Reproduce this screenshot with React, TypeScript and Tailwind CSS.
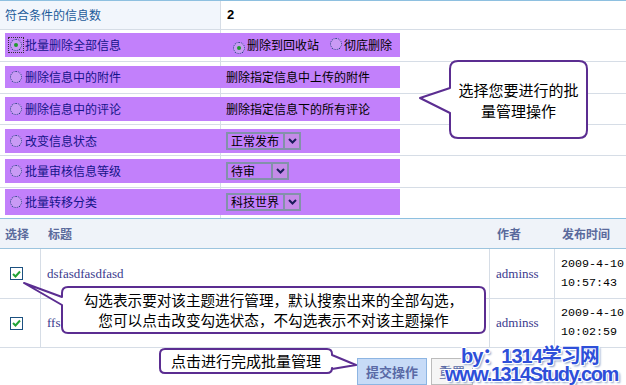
import React from "react";

const cjk = "font-['Noto_Sans_CJK_SC','Noto_Sans',sans-serif]";

function Radio({ checked = false, focus = false }: { checked?: boolean; focus?: boolean }) {
  return (
    <span className={`inline-flex items-center justify-center w-[14px] h-[14px] ${focus ? "outline-1 outline-dotted outline-[#333]" : ""}`}>
      <span className="w-[12px] h-[12px] rounded-full border border-dotted border-[#1d3f7a] flex items-center justify-center bg-[#c99af5]">
        {checked && <span className="w-[4px] h-[4px] rounded-full bg-[#1f9a2e]" />}
      </span>
    </span>
  );
}

function Select({ label, width }: { label: string; width: number }) {
  return (
    <div
      className="h-[18px] border-2 border-[#8391aa] flex items-stretch text-black text-[12px]"
      style={{ width }}
    >
      <span className="flex-1 pl-[3px] leading-[14px]">{label}</span>
      <span className="w-[16px] bg-[#c58be8] border-l-2 border-[#8391aa] flex items-center justify-center">
        <svg width="9" height="6" viewBox="0 0 9 6">
          <path d="M1 1 L4.5 4.5 L8 1" stroke="#1a1a5a" strokeWidth="2" fill="none" />
        </svg>
      </span>
    </div>
  );
}

function Check() {
  return (
    <span className="w-[13px] h-[13px] border border-[#1c5180] bg-white flex items-center justify-center">
      <svg width="9" height="8" viewBox="0 0 9 8">
        <path d="M1 4 L3.5 6.5 L8 1.5" stroke="#21a336" strokeWidth="2" fill="none" />
      </svg>
    </span>
  );
}

const rows = [
  { h: 32, top: 3, bh: 24, label: "批量删除全部信息", checked: true, focus: true, right: "radios" },
  { h: 32, top: 4, bh: 22, label: "删除信息中的附件", right: "删除指定信息中上传的附件" },
  { h: 31, top: 3, bh: 24, label: "删除信息中的评论", right: "删除指定信息下的所有评论" },
  { h: 31, top: 4, bh: 24, label: "改变信息状态", sel: "正常发布", sw: 75 },
  { h: 32, top: 3, bh: 24, label: "批量审核信息等级", sel: "待审", sw: 63 },
  { h: 31, top: 1, bh: 26, label: "批量转移分类", sel: "科技世界", sw: 75 },
];

const posts = [
  { title: "dsfasdfasdfasd", author: "adminss", d: "2009-4-10", t: "10:57:43", h: 50 },
  { title: "ffs", author: "adminss", d: "2009-4-10", t: "10:02:59", h: 49 },
];

export default function App() {
  return (
    <div className={`relative w-[626px] h-[385px] overflow-hidden bg-white text-[12px] ${cjk}`}>
      {/* top form */}
      <div className="border-t border-[#8ec0e0]">
        <div className="flex h-[29px] border-b border-[#d6dde6]">
          <div className="w-[221px] bg-[#f2f6fc] border-r border-[#d6dde6] pl-[5px] flex items-center text-[#1d5b9a]">
            符合条件的信息数
          </div>
          <div className="pl-[6px] flex items-center font-bold text-[13px] font-['Liberation_Sans',sans-serif]">2</div>
        </div>
        {rows.map((r, i) => (
          <div
            key={i}
            className={`bg-[linear-gradient(to_right,transparent_220px,#d6dde6_220px,#d6dde6_221px,transparent_221px)] pl-[5px] ${
              i === rows.length - 1 ? "border-b border-[#8ec0e0]" : "border-b border-[#d6dde6]"
            }`}
            style={{ height: r.h, paddingTop: r.top }}
          >
            <div className="w-[395px] bg-[#c280fb] flex items-center" style={{ height: r.bh }}>
              <div className="w-[216px] flex items-center gap-[2px] pl-[4px] text-[#14148a]">
                <Radio checked={r.checked} focus={r.focus} />
                <span>{r.label}</span>
              </div>
              <div className="flex-1 flex items-center pl-[5px] text-black">
                {r.right === "radios" ? (
                  <div className="flex items-center">
                    <span className="ml-[6px]"><Radio checked /></span>
                    <span className="ml-[1px]">删除到回收站</span>
                    <span className="ml-[10px]"><Radio /></span>
                    <span className="ml-[1px]">彻底删除</span>
                  </div>
                ) : r.sel ? (
                  <Select label={r.sel} width={r.sw!} />
                ) : (
                  <span>{r.right}</span>
                )}
              </div>
            </div>
          </div>
        ))}
      </div>

      {/* list header */}
      <div className="flex h-[30px] bg-[#eff3f9] border-b border-[#9cc4de] items-center font-bold text-[#5a6a9c]">
        <div className="w-[41px] pl-[5px]">选择</div>
        <div className="w-[449px] pl-[7px]">标题</div>
        <div className="w-[65px] pl-[7px]">作者</div>
        <div className="pl-[7px]">发布时间</div>
      </div>
      {posts.map((p, i) => (
        <div key={i} className="flex border-b border-[#d6dde6]" style={{ height: p.h }}>
          <div className="w-[41px] border-r border-[#d6dde6] flex items-center pl-[10px]">
            <Check />
          </div>
          <div className="w-[449px] border-r border-[#d6dde6] flex items-center pl-[6px] text-[13px] text-[#3a3a8e] font-['Liberation_Serif',serif]">
            {p.title}
          </div>
          <div className="w-[65px] border-r border-[#d6dde6] flex items-center pl-[6px] text-[13px] text-[#3a3a8e] font-['Liberation_Serif',serif]">
            {p.author}
          </div>
          <div className="flex flex-col justify-center pl-[6px] text-[11.7px] leading-[19px] text-black font-['Liberation_Mono',monospace]">
            <span>{p.d}</span>
            <span>{p.t}</span>
          </div>
        </div>
      ))}

      {/* buttons */}
      <div className="flex gap-[4px] pl-[357px] pt-[10px]">
        <button className="h-[27px] w-[70px] border border-[#8db5e2] bg-[#c7dbf7] text-[13px] font-bold text-[#5a6aa6]">
          提交操作
        </button>
        <button className="h-[27px] w-[42px] border border-[#bcbcbc] bg-[#f5f5f5] text-[13px] text-[#5a6aa6]">
          重置
        </button>
      </div>

      {/* callouts */}
      <svg className="absolute inset-0 pointer-events-none" width="626" height="385">
        <g fill="white" stroke="#5b2d91" strokeWidth="2" strokeLinejoin="round">
          <path d="M458,61 H579 Q587,61 587,69 V130 Q587,138 579,138 H458 Q450,138 450,130 V113 L420,98 L450,88 V69 Q450,61 458,61 Z" />
          <path d="M68,287 H479 Q485,287 485,293 V327 Q485,333 479,333 H68 Q62,333 62,327 V305 L24,283 L62,297 V293 Q62,287 68,287 Z" />
          <path d="M165,349 H327 Q332,349 332,354 V355 L356,365 L332,369 V368 Q332,373 327,373 H165 Q160,373 160,368 V354 Q160,349 165,349 Z" />
        </g>
      </svg>
      <div className="absolute left-[451px] top-[62px] w-[135px] h-[75px] flex items-center justify-center text-center text-[15px] leading-[21px] text-black">
        选择您要进行的批<br />量管理操作
      </div>
      <div className="absolute left-[63px] top-[288px] w-[421px] h-[44px] flex items-center justify-center text-center text-[14.6px] leading-[20px] text-black">
        勾选表示要对该主题进行管理，默认搜索出来的全部勾选，<br />您可以点击改变勾选状态，不勾选表示不对该主题操作
      </div>
      <div className="absolute left-[161px] top-[350px] w-[170px] h-[22px] flex items-center justify-center text-[15px] text-black">
        点击进行完成批量管理
      </div>

      {/* watermark */}
      <div className="absolute left-[461px] top-[344px] text-[20px] leading-[24px] font-bold tracking-[-1px] text-[#2e4fd9] font-['Liberation_Sans','Noto_Sans_CJK_SC',sans-serif] [text-shadow:1px_1px_0_#fff,-1px_-1px_0_#fff,1px_-1px_0_#fff,-1px_1px_0_#fff,2px_2px_2px_#8aa0c8]">
        by：1314学习网
      </div>
      <div className="absolute left-[445px] top-[362px] text-[20px] leading-[24px] font-bold tracking-[-1.4px] text-[#2e4fd9] font-['Liberation_Sans',sans-serif] [text-shadow:1px_1px_0_#fff,-1px_-1px_0_#fff,1px_-1px_0_#fff,-1px_1px_0_#fff,2px_2px_2px_#8aa0c8]">
        www.1314Study.com
      </div>
    </div>
  );
}
